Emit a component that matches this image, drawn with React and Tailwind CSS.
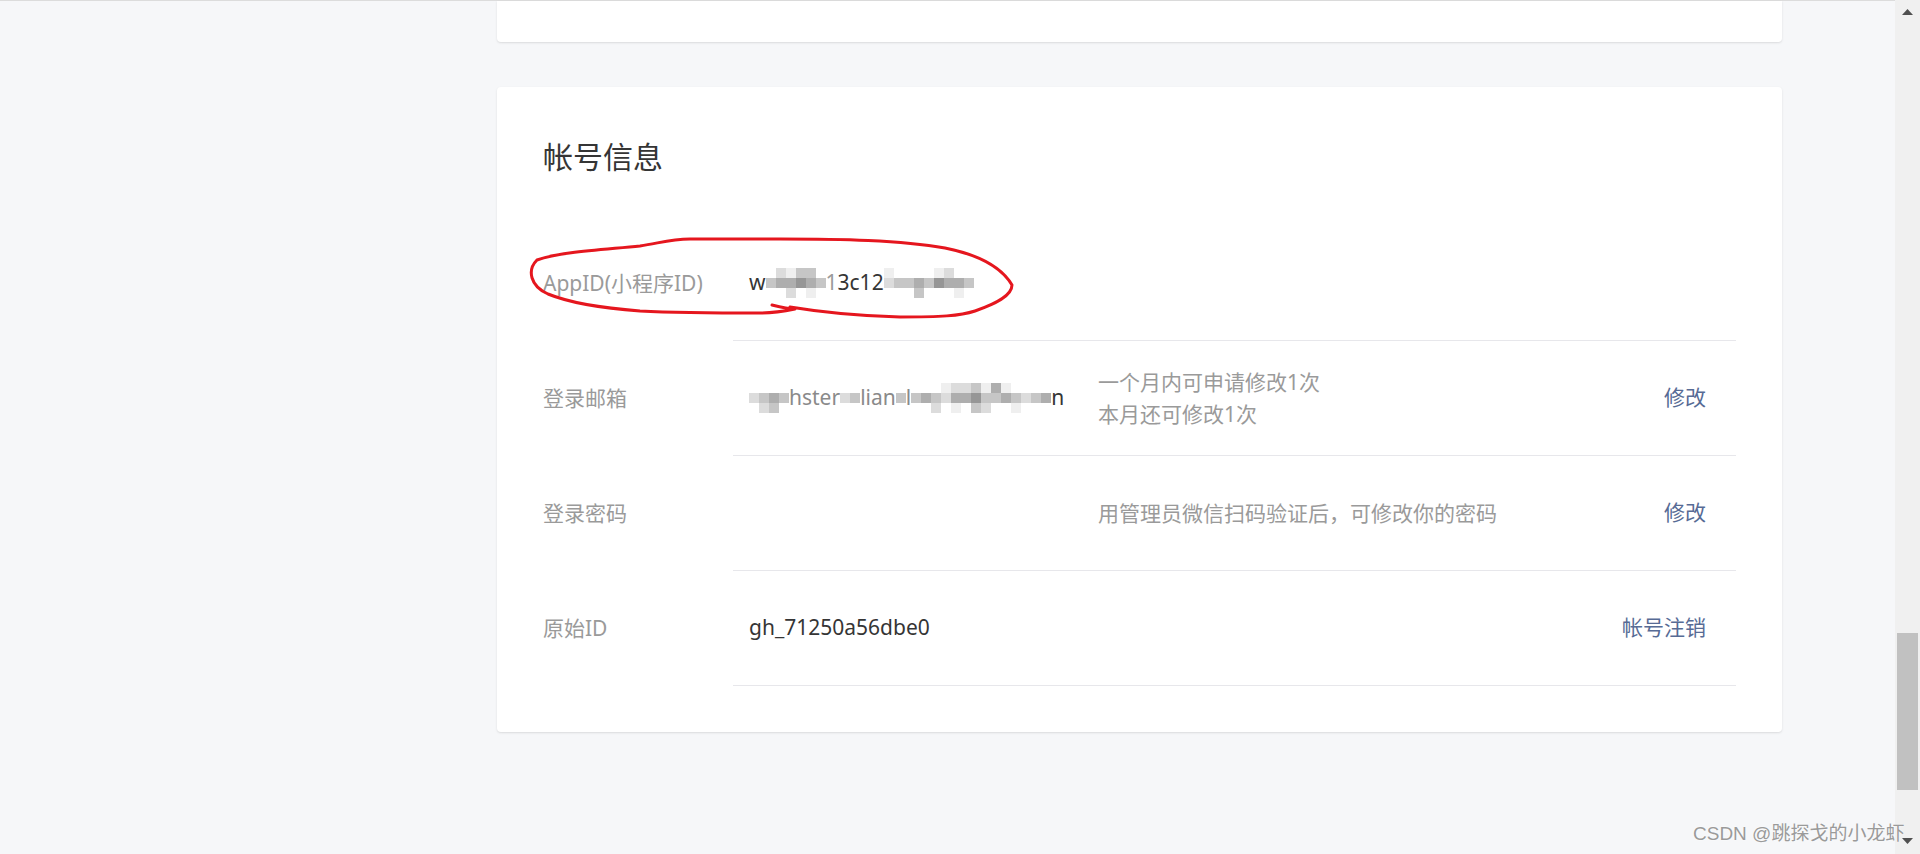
import React from 'react';

const SHADES = {
  '.': 'bg-transparent',
  '1': 'bg-[#efefef]',
  '2': 'bg-[#dcdcdc]',
  '3': 'bg-[#c6c6c6]',
  '4': 'bg-[#aeaeae]',
  '5': 'bg-[#969696]',
};

// pixelated block used to hide part of a value
const Mosaic = ({ rows }) => (
  <span className="inline-flex flex-col">
    {rows.map((row, r) => (
      <span key={r} className="flex">
        {row.split('').map((c, i) => (
          <span key={i} className={`h-[10px] w-[10px] ${SHADES[c]}`}></span>
        ))}
      </span>
    ))}
  </span>
);

const AppIdValue = () => (
  <span className="flex items-center text-[#353535]">
    <span>w</span>
    <Mosaic rows={['.2133.', '344543', '..2.1.']} />
    <span className="text-[#9a9a9a]">1</span>
    <span>3c12</span>
    <Mosaic rows={['1....12..', '233435443', '...3...1.']} />
  </span>
);

const EmailValue = () => (
  <span className="flex items-center text-[#8a8a8a]">
    <Mosaic rows={['....', '2343', '.23.']} />
    <span>hster</span>
    <Mosaic rows={['..', '23', '..']} />
    <span>lian</span>
    <Mosaic rows={['.', '3', '.']} />
    <span>l</span>
    <Mosaic rows={['...1223141....', '34324453343234', '..2.1.32..1...']} />
    <span className="text-[#353535]">n</span>
  </span>
);

const rows = [
  { label: 'AppID(小程序ID)', value: <AppIdValue /> },
  {
    label: '登录邮箱',
    value: <EmailValue />,
    desc: ['一个月内可申请修改1次', '本月还可修改1次'],
    action: '修改',
  },
  {
    label: '登录密码',
    desc: ['用管理员微信扫码验证后，可修改你的密码'],
    action: '修改',
  },
  { label: '原始ID', value: 'gh_71250a56dbe0', action: '帐号注销' },
];

const InfoRow = ({ label, value, desc, action }) => (
  <div className="flex h-[115px]">
    <div className="flex w-[190px] items-center text-[#9a9a9a]">{label}</div>
    <div className="flex flex-1 items-center border-b border-[#e7e7eb]">
      <div className="w-[365px] pl-[16px] text-[#353535]">{value}</div>
      <div className="flex-1 leading-[32px] text-[#9a9a9a]">
        {desc && desc.map((line) => <div key={line}>{line}</div>)}
      </div>
      {action && <a className="pr-[30px] text-[#576b95] cursor-pointer">{action}</a>}
    </div>
  </div>
);

const Scrollbar = () => (
  <div className="flex w-[25px] flex-col bg-[#f0f0f0]">
    <div className="flex h-[25px] items-center justify-center">
      <svg width="11" height="7" viewBox="0 0 11 7">
        <path d="M5.5 0 L11 6 L0 6 Z" fill="#505050" />
      </svg>
    </div>
    <div className="ml-[2px] mt-[608px] h-[157px] w-[21px] bg-[#c1c1c1]"></div>
    <div className="flex-1"></div>
    <div className="flex h-[25px] items-center justify-center">
      <svg width="11" height="7" viewBox="0 0 11 7">
        <path d="M0 0 L11 0 L5.5 6 Z" fill="#505050" />
      </svg>
    </div>
  </div>
);

export default function App() {
  return (
    <div className="relative flex h-[854px] w-[1920px] overflow-hidden bg-[#f6f7f9] font-['Noto_Sans','Noto_Sans_CJK_SC',sans-serif] text-[21px]">
      <main className="flex-1 border-t border-[#dcdcdc] pl-[497px]">
        <div className="h-[41px] w-[1285px] rounded-b-[4px] bg-white shadow-[0_1px_2px_rgba(140,140,140,0.25)]"></div>

        <section className="mt-[45px] w-[1285px] rounded-[4px] bg-white px-[46px] pb-[46px] pt-[47px] shadow-[0_1px_2px_rgba(140,140,140,0.25)]">
          <h2 className="text-[30px] leading-[45px] text-[#353535]">帐号信息</h2>
          <div className="mt-[47px]">
            {rows.map((row) => (
              <InfoRow key={row.label} {...row} />
            ))}
          </div>
        </section>
      </main>

      <Scrollbar />

      {/* red pen mark around the AppID row */}
      <svg className="pointer-events-none absolute left-0 top-0" width="1920" height="854">
        <path
          d="M537 260 C560 252 600 250 640 246 C660 243 670 239 690 239 L780 239 C840 239 900 240 945 248 C980 255 1002 268 1012 285 C1012 296 995 304 975 311 C960 316 940 317 900 317 C860 316 820 312 790 307 M772 305 C780 307 790 309 795 309 C785 311 775 313 760 313 C720 313 680 313 640 311 C600 308 570 303 548 294 C530 286 527 270 537 260"
          fill="none"
          stroke="#e5161e"
          strokeWidth="3"
          strokeLinecap="round"
          strokeLinejoin="round"
        />
      </svg>

      <div className="pointer-events-none absolute left-[1693px] top-[822px] font-['Liberation_Sans','Noto_Sans_CJK_SC',sans-serif] text-[19px] leading-[24px] text-[#9a9a9a] [text-shadow:0_0_2px_#fff]">
        CSDN @跳探戈的小龙虾
      </div>
    </div>
  );
}
